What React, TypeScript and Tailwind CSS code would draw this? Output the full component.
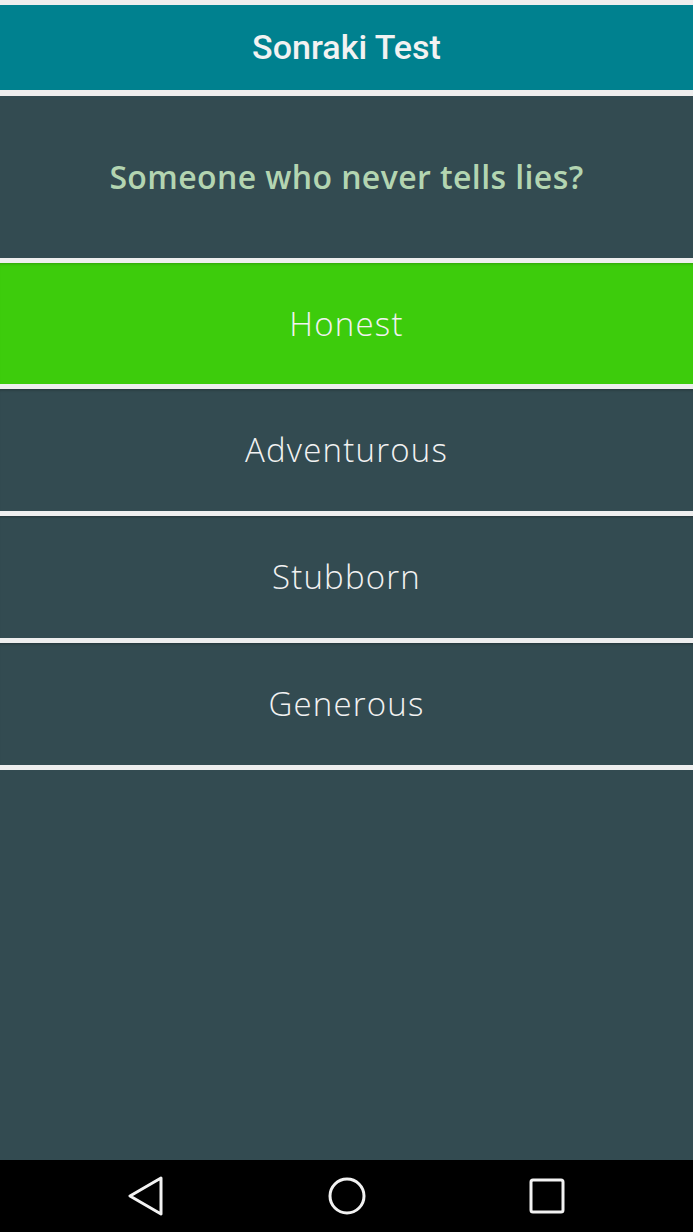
import React from "react";

const options = ["Honest", "Adventurous", "Stubborn", "Generous"];

function NavBar() {
  return (
    <div className="flex h-[72px] items-center justify-center gap-[160px] bg-black">
      <svg width="40" height="40" viewBox="0 0 40 40" fill="none">
        <path
          d="M34 2 L3 20 L34 38 Z"
          stroke="#f2f2f2"
          strokeWidth="3"
          strokeLinejoin="round"
        />
      </svg>
      <svg width="40" height="40" viewBox="0 0 40 40" fill="none">
        <circle cx="20" cy="20" r="17" stroke="#f2f2f2" strokeWidth="3" />
      </svg>
      <svg width="40" height="40" viewBox="0 0 40 40" fill="none">
        <rect x="4" y="4" width="32" height="32" rx="2" stroke="#f2f2f2" strokeWidth="3" />
      </svg>
    </div>
  );
}

export default function App() {
  const selected = 0;

  return (
    <div
      className="flex h-[1232px] w-[693px] flex-col bg-[#eeeeee]"
      style={{ fontFamily: '"Open Sans", sans-serif' }}
    >
      <div className="mt-[5px] flex h-[85px] items-center justify-center bg-[#00818f]">
        <span
          className="text-[34px] font-medium text-[#f2f2f2]"
          style={{ fontFamily: "Roboto, sans-serif" }}
        >
          Sonraki Test
        </span>
      </div>

      <div className="mt-[6px] flex h-[162px] items-center justify-center bg-[#334b51]">
        <span className="text-[32px] font-semibold tracking-[0.4px] text-[#b3d5b1]">
          Someone who never tells lies?
        </span>
      </div>

      <div className="flex flex-col gap-[5px] pt-[5px]">
        {options.map((opt, i) => (
          <div
            key={opt}
            className={
              i === selected
                ? "flex h-[121px] items-center justify-center bg-[#3dcc0c] shadow-[inset_0_3px_3px_-2px_rgba(0,0,0,0.2)]"
                : "flex h-[122px] items-center justify-center bg-[#334b51] shadow-[inset_0_3px_3px_-2px_rgba(0,0,0,0.3)]"
            }
          >
            <span className="text-[33px] font-light tracking-[1.2px] text-[#f2f2f2]">{opt}</span>
          </div>
        ))}
      </div>

      <div className="mt-[5px] flex-1 bg-[#334b51]" />

      <NavBar />
    </div>
  );
}
